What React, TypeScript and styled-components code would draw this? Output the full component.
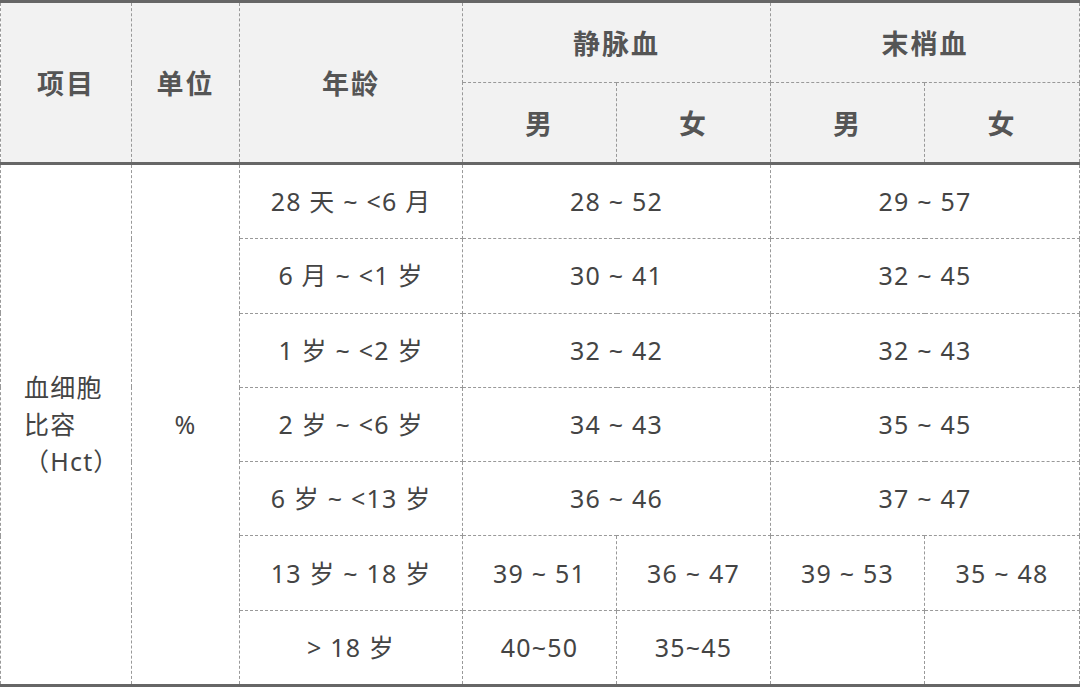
import React from 'react'
import styled, { createGlobalStyle } from 'styled-components'

const GlobalStyle = createGlobalStyle`
  html, body {
    margin: 0;
    padding: 0;
    background: #fff;
  }
  body {
    font-family: "Noto Sans", "Noto Sans CJK SC", sans-serif;
  }
`

const Table = styled.table`
  width: 1079px;
  border-collapse: collapse;
  table-layout: fixed;
  border-top: 3px solid #666;
  border-bottom: 3px solid #666;
  color: #444;
  font-size: 25px;
  letter-spacing: 1.2px;
`

const Head = styled.thead`
  background: #f2f2f2;
  border-bottom: 3px solid #666;
`

const HeadCell = styled.th`
  height: 79px;
  padding: 0;
  border: 1px dashed #999;
  font-size: 27px;
  font-weight: 700;
  letter-spacing: 2px;
  color: #555;
  text-align: center;
  vertical-align: middle;
`

const Cell = styled.td`
  height: 73.3px;
  padding: 0;
  border: 1px dashed #999;
  text-align: center;
  vertical-align: middle;
  line-height: 37px;
`

const Name = styled.div`
  padding-left: 23px;
  padding-right: 18px;
  text-align: left;
  line-height: 37px;
`

type Row = {
  age: string
  venous: string[]
  capillary: string[]
}

const rows: Row[] = [
  { age: '28 天 ~ <6 月', venous: ['28 ~ 52'], capillary: ['29 ~ 57'] },
  { age: '6 月 ~ <1 岁', venous: ['30 ~ 41'], capillary: ['32 ~ 45'] },
  { age: '1 岁 ~ <2 岁', venous: ['32 ~ 42'], capillary: ['32 ~ 43'] },
  { age: '2 岁 ~ <6 岁', venous: ['34 ~ 43'], capillary: ['35 ~ 45'] },
  { age: '6 岁 ~ <13 岁', venous: ['36 ~ 46'], capillary: ['37 ~ 47'] },
  { age: '13 岁 ~ 18 岁', venous: ['39 ~ 51', '36 ~ 47'], capillary: ['39 ~ 53', '35 ~ 48'] },
  { age: '> 18 岁', venous: ['40~50', '35~45'], capillary: ['', ''] },
]

const cols = [131, 108, 223, 154, 154, 154, 155]

export default function App() {
  return (
    <>
      <GlobalStyle />
      <Table>
        <colgroup>
          {cols.map((w, i) => (
            <col key={i} style={{ width: w }} />
          ))}
        </colgroup>
        <Head>
          <tr>
            <HeadCell rowSpan={2}>项目</HeadCell>
            <HeadCell rowSpan={2}>单位</HeadCell>
            <HeadCell rowSpan={2}>年龄</HeadCell>
            <HeadCell colSpan={2}>静脉血</HeadCell>
            <HeadCell colSpan={2}>末梢血</HeadCell>
          </tr>
          <tr>
            <HeadCell>男</HeadCell>
            <HeadCell>女</HeadCell>
            <HeadCell>男</HeadCell>
            <HeadCell>女</HeadCell>
          </tr>
        </Head>
        <tbody>
          {rows.map((r, i) => (
            <tr key={r.age}>
              {i === 0 && (
                <>
                  <Cell rowSpan={rows.length}>
                    <Name>血细胞比容（Hct）</Name>
                  </Cell>
                  <Cell rowSpan={rows.length}>%</Cell>
                </>
              )}
              <Cell>{r.age}</Cell>
              {r.venous.length === 1 ? (
                <Cell colSpan={2}>{r.venous[0]}</Cell>
              ) : (
                r.venous.map((v, j) => <Cell key={j}>{v}</Cell>)
              )}
              {r.capillary.length === 1 ? (
                <Cell colSpan={2}>{r.capillary[0]}</Cell>
              ) : (
                r.capillary.map((v, j) => <Cell key={j}>{v}</Cell>)
              )}
            </tr>
          ))}
        </tbody>
      </Table>
    </>
  )
}
